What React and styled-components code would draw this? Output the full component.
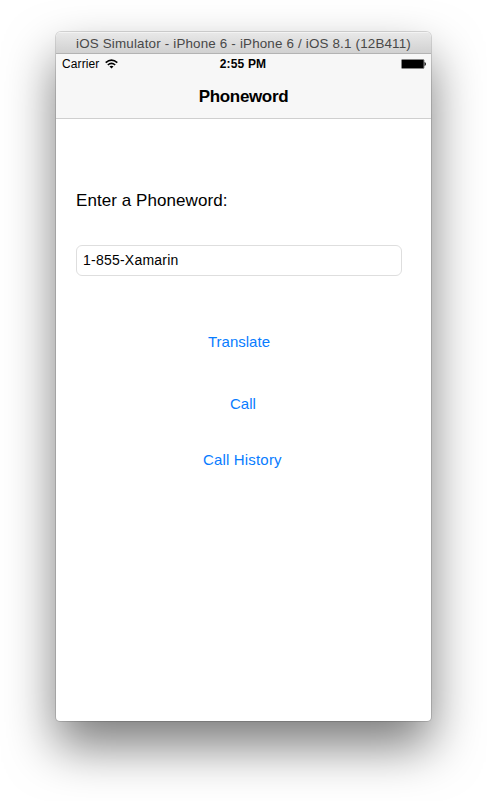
import React from 'react';
import styled, { createGlobalStyle } from 'styled-components';

const GlobalStyle = createGlobalStyle`
  * { box-sizing: border-box; }
  body {
    margin: 0;
    background: #fff;
    overflow: hidden;
    font-family: "Liberation Sans", Arial, sans-serif;
    color: #000;
  }
`;

const Desktop = styled.main`
  height: 801px;
  padding: 32px 56px 0;
`;

const Window = styled.section`
  width: 375px;
  height: 689px;
  display: flex;
  flex-direction: column;
  border-radius: 5px 5px 4px 4px;
  overflow: hidden;
  background: #fff;
  box-shadow: 0 0 0 1px rgba(0, 0, 0, 0.14), 0 25px 50px rgba(0, 0, 0, 0.52);
`;

const TitleBar = styled.header`
  height: 22px;
  display: flex;
  justify-content: center;
  flex-shrink: 0;
  background: linear-gradient(#e9e9e9, #d1d1d1);
  border-bottom: 1px solid #b3b3b3;
  box-shadow: inset 0 1px #f3f3f3;
  color: #484848;
  font-size: 13.4px;
  line-height: 23px;
  letter-spacing: 0.17px;
  white-space: nowrap;
`;

const NavigationArea = styled.div`
  height: 65px;
  flex-shrink: 0;
  background: #f7f7f7;
  border-bottom: 1px solid #cfcfcf;
`;

const StatusBar = styled.div`
  height: 20px;
  display: grid;
  grid-template-columns: 1fr auto 1fr;
  align-items: center;
  padding: 0 5px 0 6px;
  font-size: 12px;
  line-height: 20px;
`;

const Carrier = styled.div`
  display: flex;
  align-items: center;
  gap: 6px;
  letter-spacing: 0.1px;
`;

const Time = styled.time`
  font-weight: bold;
  letter-spacing: 0.15px;
  margin-right: 2px;
`;

const BatterySlot = styled.div`
  display: flex;
  justify-content: flex-end;
`;

const NavTitle = styled.h1`
  margin: 0;
  text-align: center;
  font-size: 17px;
  line-height: 46px;
  letter-spacing: -0.35px;
`;

const Form = styled.div`
  display: flex;
  flex-direction: column;
  padding: 71px 29px 0 20px;
`;

const Label = styled.label`
  font-size: 17px;
  line-height: 22px;
  letter-spacing: 0.07px;
`;

const Input = styled.input`
  width: 326px;
  height: 31px;
  margin-top: 33px;
  padding: 0 6px 2px;
  border: 1px solid #dedede;
  border-radius: 6px;
  background: #fff;
  color: #000;
  font: 14px "Liberation Sans", Arial, sans-serif;
  letter-spacing: 0.23px;
  outline: none;
`;

const Actions = styled.div`
  display: flex;
  flex-direction: column;
  align-items: flex-start;
  padding-top: 50px;
`;

const Action = styled.button`
  height: 30px;
  margin: ${({ $top }) => $top}px 0 0 ${({ $left }) => $left}px;
  padding: 0;
  border: 0;
  background: none;
  color: #087cff;
  font: 15px "Liberation Sans", Arial, sans-serif;
  letter-spacing: ${({ $tracking = 0 }) => $tracking}px;
`;

const WifiIcon = () => (
  <svg width="13" height="10" viewBox="0 0 13 10" fill="none" stroke="#000" strokeWidth="1.6">
    <path d="M.7 3.7Q6.5-1.5 12.3 3.7M2.8 6Q6.5 2.8 10.2 6" />
    <path d="M4.5 7.5Q6.5 5.9 8.5 7.5L6.5 9.6Z" fill="#000" stroke="none" />
  </svg>
);

const BatteryIcon = () => (
  <svg width="25" height="10" viewBox="0 0 25 10">
    <rect x=".5" y=".5" width="22.5" height="9" rx="1" fill="#000" stroke="#858585" />
    <path d="M23.5 3Q25 3.4 25 5T23.5 7Z" fill="#111" />
  </svg>
);

export default function App() {
  return (
    <>
      <GlobalStyle />
      <Desktop>
        <Window>
          <TitleBar>iOS Simulator - iPhone 6 - iPhone 6 / iOS 8.1 (12B411)</TitleBar>
          <NavigationArea>
            <StatusBar>
              <Carrier>Carrier<WifiIcon /></Carrier>
              <Time>2:55 PM</Time>
              <BatterySlot><BatteryIcon /></BatterySlot>
            </StatusBar>
            <NavTitle>Phoneword</NavTitle>
          </NavigationArea>
          <Form>
            <Label htmlFor="phoneword">Enter a Phoneword:</Label>
            <Input id="phoneword" defaultValue="1-855-Xamarin" />
            <Actions>
              <Action $top={0} $left={132}>Translate</Action>
              <Action $top={32} $left={154}>Call</Action>
              <Action $top={26} $left={127} $tracking={0.17}>Call History</Action>
            </Actions>
          </Form>
        </Window>
      </Desktop>
    </>
  );
}
